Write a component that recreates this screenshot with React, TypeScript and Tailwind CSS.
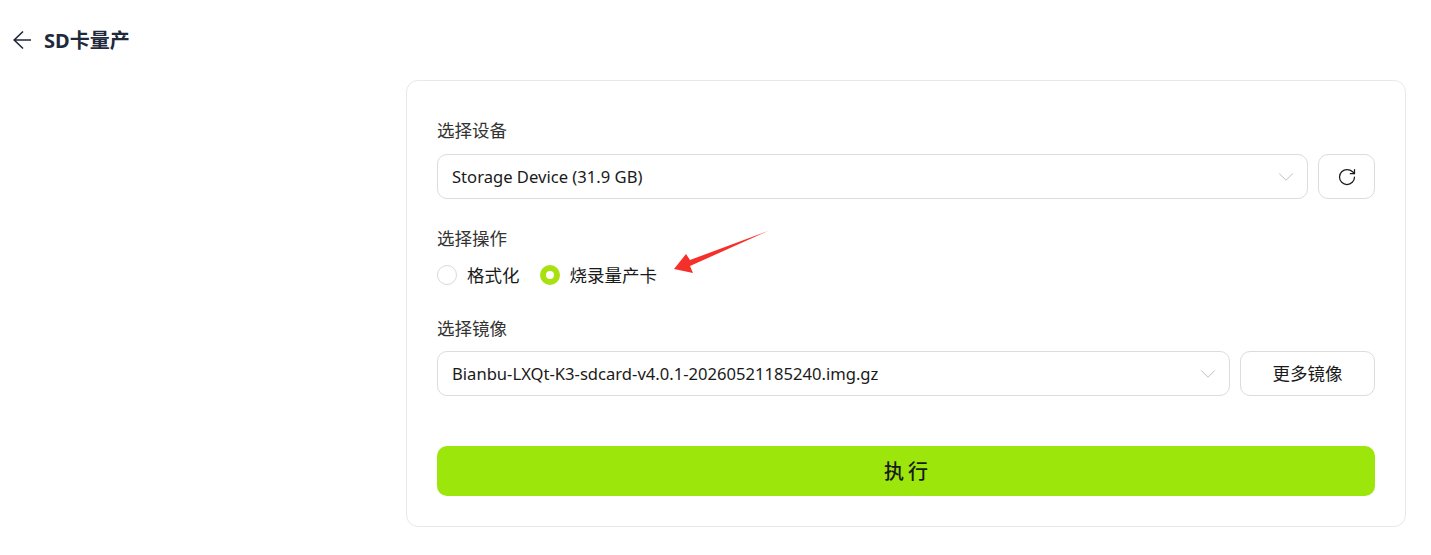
import React from 'react';
import { ChevronDown, RotateCw } from 'lucide-react';

const fontStack = "font-['Noto_Sans','Noto_Sans_CJK_SC',sans-serif]";

const SelectBox = ({ value }: { value: string }) => (
  <div className="flex-1 h-[45px] flex items-center justify-between pl-[14px] pr-[8px] border border-[#dcdcdc] rounded-[10px] bg-white">
    <span className="text-[16.6px] pt-[1px] text-[#1a1a1a]">{value}</span>
    <ChevronDown className="w-[26px] h-[26px] text-[#bdbdbd]" strokeWidth={0.9} />
  </div>
);

const Radio = ({ label, checked }: { label: string; checked?: boolean }) => (
  <div className="flex items-center gap-[10px]">
    {checked ? (
      <span className="w-[20px] h-[20px] rounded-full border-[6px] border-[#a8e010] bg-white" />
    ) : (
      <span className="w-[20px] h-[20px] rounded-full border border-[#d9d9d9] bg-white" />
    )}
    <span className="text-[17.5px] text-[#1a1a1a]">{label}</span>
  </div>
);

const App: React.FC = () => {
  return (
    <div className={`relative w-[1431px] h-[555px] bg-white overflow-hidden ${fontStack}`}>
      <div className="h-[80px] flex items-center gap-[12px] pl-[13px]">
        <svg className="w-[19px] h-[20px] text-[#1f2937]" viewBox="0 0 19 20" fill="none" stroke="currentColor" strokeWidth="1.6">
          <path d="M1 10H18M10 1.5L1.2 10L10 18.5" />
        </svg>
        <h1 className="text-[20px] pt-[2px] font-bold text-[#1e293b]">SD卡量产</h1>
      </div>

      <div className="ml-[406px] w-[1000px] h-[447px] border border-[#e8e8e8] rounded-[12px] px-[30px] pt-[37px]">
        <div className="text-[17.5px] leading-[24px] text-[#333]">选择设备</div>
        <div className="flex gap-[10px] mt-[12px]">
          <SelectBox value="Storage Device (31.9 GB)" />
          <button className="w-[57px] h-[45px] flex items-center justify-center border border-[#dcdcdc] rounded-[10px]">
            <RotateCw className="w-[20px] h-[20px] text-[#1a1a1a]" strokeWidth={1.5} />
          </button>
        </div>

        <div className="text-[17.5px] leading-[24px] text-[#333] mt-[27px]">选择操作</div>
        <div className="flex items-center gap-[20px] mt-[13px] h-[24px]">
          <Radio label="格式化" />
          <Radio label="烧录量产卡" checked />
        </div>

        <div className="text-[17.5px] leading-[24px] text-[#333] mt-[29px]">选择镜像</div>
        <div className="flex gap-[10px] mt-[11px]">
          <SelectBox value="Bianbu-LXQt-K3-sdcard-v4.0.1-20260521185240.img.gz" />
          <button className="w-[135px] h-[45px] text-[17.5px] text-[#1a1a1a] border border-[#dcdcdc] rounded-[10px]">更多镜像</button>
        </div>

        <button className="w-full h-[50px] mt-[50px] pl-[4px] pt-[2px] bg-[#9ce60c] rounded-[10px] text-[20px] font-medium tracking-[4px] text-[#1a1a1a]">执行</button>
      </div>

      <svg className="absolute left-0 top-0 pointer-events-none" width="1431" height="555">
        <polygon points="768,231 690,260 686,254 674,269 693,273 690,266" fill="#f5302a" />
      </svg>
    </div>
  );
};

export default App;
